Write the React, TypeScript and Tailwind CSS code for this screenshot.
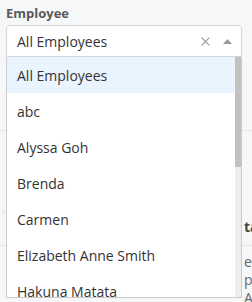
const employees = [
  "All Employees",
  "abc",
  "Alyssa Goh",
  "Brenda",
  "Carmen",
  "Elizabeth Anne Smith",
  "Hakuna Matata",
  "Jane Doe",
];

export default function App() {
  return (
    <div className="w-[252px] h-[302px] overflow-hidden bg-[#f6f7f9] font-['Open_Sans',sans-serif]">
      <div className="px-[6px] pt-[4px]">
        <div className="text-[13px] font-bold leading-[18px] text-[#5a5a5a]">Employee</div>
        <div className="relative mt-[3px] w-[236px]">
          <div className="flex h-[32px] items-center rounded-t-[4px] border border-[#d3d6da] bg-white pl-[10px] pr-[9px]">
            <span className="flex-1 text-[14px] text-[#333]">All Employees</span>
            <svg width="9" height="9" viewBox="0 0 9 9" className="mt-[1px]">
              <path d="M0.6 0.6 L8.4 8.4 M8.4 0.6 L0.6 8.4" stroke="#9a9a9a" strokeWidth="1.2" />
            </svg>
            <svg width="9" height="5" viewBox="0 0 9 5" className="ml-[13px]">
              <path d="M0 5 L4.5 0 L9 5 Z" fill="#999" />
            </svg>
          </div>

          {/* open dropdown menu */}
          <div className="absolute left-0 right-0 top-full z-10 flex h-[241px] overflow-hidden border border-t-0 border-[#ccc] bg-white">
            <div className="flex-1">
              {employees.map((name, i) => (
                <div
                  key={name}
                  className={`flex h-[36px] items-center pl-[10px] text-[14px] text-[#333] ${
                    i === 0 ? "bg-[#eaf4fe]" : ""
                  }`}
                >
                  {name}
                </div>
              ))}
            </div>
            <div className="w-[6px] bg-[#eeeeee]">
              <div className="h-[110px] bg-[#c1c1c1]" />
            </div>
          </div>
        </div>
      </div>

      {/* page content behind the dropdown */}
      <div className="mt-[73px] border-t border-[#e3e5e8]">
        <div className="flex h-[114px] items-end justify-between pb-[8px]">
          <span className="mb-[14px] text-[14px] font-bold text-[#e2e4e7]">↑</span>
          <span className="w-[8px] whitespace-nowrap text-[14px] font-bold text-[#444]">ta</span>
        </div>
        <div className="flex justify-end border-t border-[#e3e5e8] pt-[7px]">
          <div className="w-[8px] whitespace-nowrap text-[14px] leading-[18px] text-[#666]">
            <div>ea</div>
            <div>p</div>
            <div>AC</div>
          </div>
        </div>
      </div>
    </div>
  );
}
